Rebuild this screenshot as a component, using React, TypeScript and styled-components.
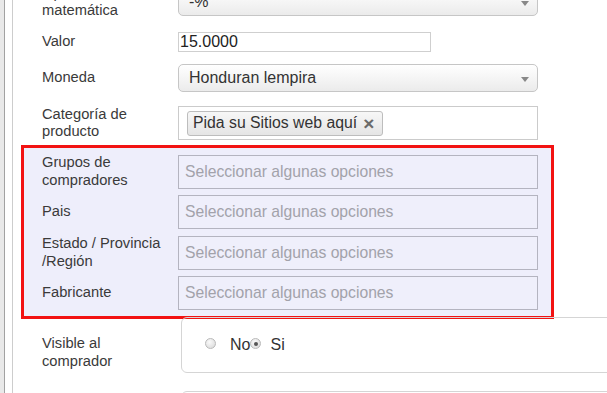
import React from "react";
import styled, { createGlobalStyle } from "styled-components";

const Global = createGlobalStyle`
  html, body { margin: 0; padding: 0; background: #fff; overflow: hidden; }
  body { font-family: "Liberation Sans", Arial, sans-serif; }
`;

const Page = styled.div`
  width: 607px;
  height: 393px;
  overflow: hidden;
  background: #e9e9e9;
  display: flex;
`;

const Frame = styled.div`
  margin-left: 4px;
  flex: 1;
  display: flex;
  background: #fff;
  border-left: 1px solid #a2a2a2;
  padding-left: 7px;
`;

const Content = styled.div`
  flex: 1;
  overflow: hidden;
  border-left: 1px solid #cdcdcd;
`;

const Form = styled.div`
  margin-top: -15.5px;
  display: flex;
  flex-direction: column;
`;

const Row = styled.div<{ $gap?: number; $indent?: number }>`
  display: flex;
  align-items: center;
  margin-top: ${(p) => p.$gap ?? 0}px;
  padding-left: ${(p) => p.$indent ?? 29}px;
`;

const Label = styled.div<{ $top?: number }>`
  flex: none;
  width: 136px;
  box-sizing: border-box;
  padding-right: 8px;
  padding-top: ${(p) => p.$top ?? 0}px;
  font-size: 14.7px;
  line-height: 17.5px;
  color: #3a3a3a;
`;

const Select = styled.div`
  width: 360px;
  height: 28px;
  box-sizing: border-box;
  border: 1px solid #c6c6c6;
  border-radius: 5px;
  background: linear-gradient(#ffffff, #ebebeb);
  display: flex;
  align-items: center;
  justify-content: space-between;
  padding: 0 8px 0 10px;
  font-size: 16px;
  color: #333;
`;

const Caret = styled.span`
  width: 0;
  height: 0;
  margin-top: 2px;
  border-left: 4.5px solid transparent;
  border-right: 4.5px solid transparent;
  border-top: 5px solid #888;
`;

const TextInput = styled.input<{ $w?: number }>`
  width: ${(p) => p.$w ?? 360}px;
  height: 20px;
  box-sizing: border-box;
  border: 1px solid #cfcfcf;
  padding: 0 0 0 1px;
  margin: 0;
  font: 16px "Liberation Sans", Arial, sans-serif;
  color: #222;
  background: #fff;
  outline: none;
`;

const TagBox = styled.div`
  width: 360px;
  height: 34px;
  box-sizing: border-box;
  border: 1px solid #cbcbcb;
  background: #fff;
  display: flex;
  align-items: center;
  padding-left: 8px;
`;

const Tag = styled.span`
  display: inline-flex;
  align-items: center;
  gap: 6px;
  height: 25px;
  box-sizing: border-box;
  border: 1px solid #bdbdbd;
  border-radius: 3px;
  background: linear-gradient(#f7f7f7, #e5e5e5);
  padding: 0 8px 0 5px;
  font-size: 15.8px;
  color: #333;
`;

const TagX = styled.span`
  font-weight: bold;
  font-size: 19px;
  line-height: 1;
  color: #6a6a6a;
`;

const Highlight = styled.section`
  margin: 4.5px 0 0 8px;
  width: 533px;
  box-sizing: border-box;
  border: 3px solid #f21212;
  background: #eeeefb;
  padding: 6px 0 6px 18px;
  display: flex;
  flex-direction: column;
  gap: 6px;
`;

const MultiInput = styled.input`
  width: 360px;
  height: 34px;
  box-sizing: border-box;
  border: 1px solid #b4b4c0;
  background: #efeffb;
  padding: 0 6px;
  margin: 0;
  font: 15.7px "Liberation Sans", Arial, sans-serif;
  color: #333;
  outline: none;
  &::placeholder {
    color: #a2a2aa;
  }
`;

const RadioRow = styled.div`
  display: flex;
  align-items: flex-start;
  padding-left: 29px;
  margin-top: -2px;
`;

const Panel = styled.div<{ $h: number }>`
  margin-left: 3px;
  width: 520px;
  height: ${(p) => p.$h}px;
  flex: none;
  box-sizing: border-box;
  border: 1px solid #d5d5d5;
  border-radius: 6px;
  display: flex;
  align-items: center;
  padding-left: 23px;
  font-size: 16px;
  color: #333;
`;

const Radio = styled.span<{ $checked?: boolean }>`
  position: relative;
  width: 9px;
  height: 9px;
  margin-top: -3px;
  border-radius: 50%;
  border: 1px solid #b9b9b9;
  background: radial-gradient(circle at 40% 35%, #fafafa, #d6d6d6);
  flex: none;
  &::after {
    content: "";
    display: ${(p) => (p.$checked ? "block" : "none")};
    position: absolute;
    left: 2.5px;
    top: 2.5px;
    width: 4px;
    height: 4px;
    border-radius: 50%;
    background: #555;
  }
`;

const RadioText = styled.span<{ $ml: number }>`
  margin-left: ${(p) => p.$ml}px;
`;

const NextRow = styled.div`
  display: flex;
  padding-left: 165px;
  margin-top: 18px;
`;

export default function App() {
  return (
    <>
      <Global />
      <Page>
        <Frame>
          <Content>
            <Form>
              <Row>
                <Label>Operación matemática</Label>
                <Select>
                  <span>-%</span>
                  <Caret />
                </Select>
              </Row>
              <Row $gap={12.5}>
                <Label>Valor</Label>
                <TextInput $w={253} readOnly defaultValue="15.0000" />
              </Row>
              <Row $gap={12}>
                <Label>Moneda</Label>
                <Select>
                  <span>Honduran lempira</span>
                  <Caret />
                </Select>
              </Row>
              <Row $gap={13.5}>
                <Label>Categoría de producto</Label>
                <TagBox>
                  <Tag>
                    Pida su Sitios web aquí
                    <TagX>×</TagX>
                  </Tag>
                </TagBox>
              </Row>
              <Highlight>
                {[
                  "Grupos de compradores",
                  "Pais",
                  "Estado / Provincia /Región",
                  "Fabricante",
                ].map((l) => (
                  <Row key={l} $indent={0}>
                    <Label>{l}</Label>
                    <MultiInput placeholder="Seleccionar algunas opciones" />
                  </Row>
                ))}
              </Highlight>
              <RadioRow>
                <Label $top={18}>Visible al comprador</Label>
                <Panel $h={56}>
                  <Radio />
                  <RadioText $ml={14}>No</RadioText>
                  <Radio $checked />
                  <RadioText $ml={9}>Si</RadioText>
                </Panel>
              </RadioRow>
              <NextRow>
                <Panel $h={40} />
              </NextRow>
            </Form>
          </Content>
        </Frame>
      </Page>
    </>
  );
}
